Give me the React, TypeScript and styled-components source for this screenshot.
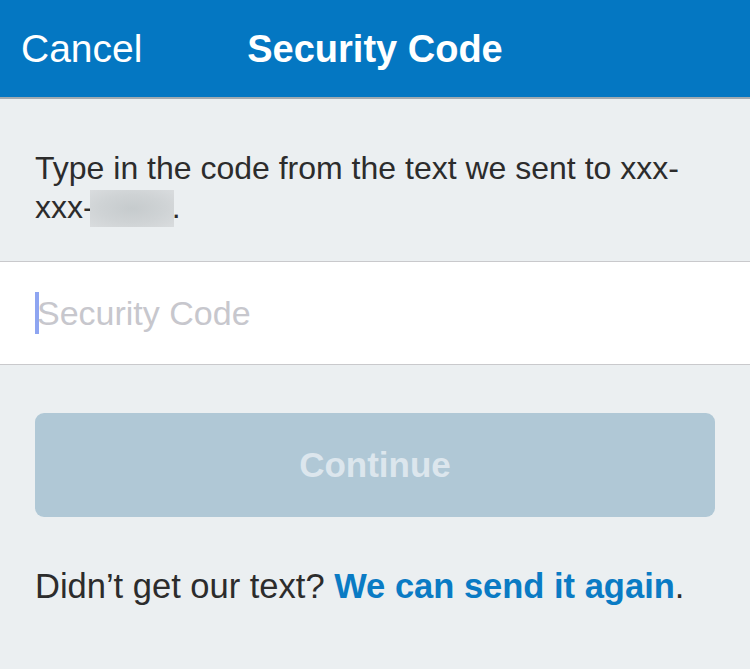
import React from 'react'
import styled, { createGlobalStyle } from 'styled-components';

const GlobalStyle = createGlobalStyle`
  html, body {
    margin: 0;
    padding: 0;
    background: #ebeff1;
    font-family: "Liberation Sans", Arial, sans-serif;
  }
`;

const Page = styled.div`
  width: 750px;
  min-height: 669px;
  background: #ebeff1;
`;

const NavBar = styled.header`
  display: grid;
  grid-template-columns: 1fr auto 1fr;
  align-items: center;
  height: 97px;
  background: #0477c2;
  border-bottom: 2px solid #a2abb1;
  color: #ffffff;
`;

const NavButton = styled.span`
  padding-left: 21px;
  font-size: 39px;
  padding-top: 1px;
`;

const NavTitle = styled.h1`
  margin: 0;
  font-size: 38px;
  font-weight: 700;
  padding-top: 1px;
`;

const Message = styled.p`
  margin: 0;
  padding: 50px 35px 34px;
  font-size: 32px;
  line-height: 39px;
  color: #2c2c2c;
`;

const Masked = styled.span`
  display: inline-block;
  width: 84px;
  height: 37px;
  margin: 0 -2px 0 -4px;
  vertical-align: -9px;
  background: radial-gradient(ellipse at 50% 50%, #c6cbcd 0%, #cfd3d5 55%, #d9dcde 100%);
`;

const Field = styled.div`
  display: flex;
  align-items: center;
  height: 102px;
  padding-left: 35px;
  background: #ffffff;
  border-top: 1px solid #c9c9cc;
  border-bottom: 1px solid #c9c9cc;
`;

const Caret = styled.span`
  width: 4px;
  height: 42px;
  background: #8ea5f1;
`;

const Input = styled.input`
  flex: 1;
  margin-left: -2px;
  border: none;
  outline: none;
  background: transparent;
  font-family: inherit;
  font-size: 34px;
  color: #2c2c2c;
  padding: 0;

  &::placeholder {
    color: #c7c7cd;
  }
`;

const PrimaryButton = styled.button<{ $disabled?: boolean }>`
  display: block;
  width: 680px;
  height: 104px;
  margin: 48px 35px 0;
  border: none;
  border-radius: 9px;
  background: ${props => props.$disabled ? "#b0c8d6" : "#0477c2"};
  color: ${props => props.$disabled ? "#dce6ed" : "#ffffff"};
  font-family: inherit;
  font-size: 35px;
  font-weight: 700;
  padding: 0;
`;

const Footer = styled.p`
  margin: 0;
  padding: 49px 35px 0;
  font-size: 34.5px;
  line-height: 40px;
  color: #2c2c2c;
`;

const Link = styled.a`
  color: #0a7bc4;
  font-weight: 700;
  text-decoration: none;
`;

export default function App() {
  return (
    <Page>
      <GlobalStyle />
      <NavBar>
        <NavButton>Cancel</NavButton>
        <NavTitle>Security Code</NavTitle>
        <span />
      </NavBar>
      <Message>
        Type in the code from the text we sent to xxx-
        <br />
        xxx-<Masked />.
      </Message>
      <Field>
        <Caret />
        <Input placeholder="Security Code" />
      </Field>
      <PrimaryButton $disabled>Continue</PrimaryButton>
      <Footer>
        Didn’t get our text? <Link href="#">We can send it again</Link>.
      </Footer>
    </Page>
  );
}
